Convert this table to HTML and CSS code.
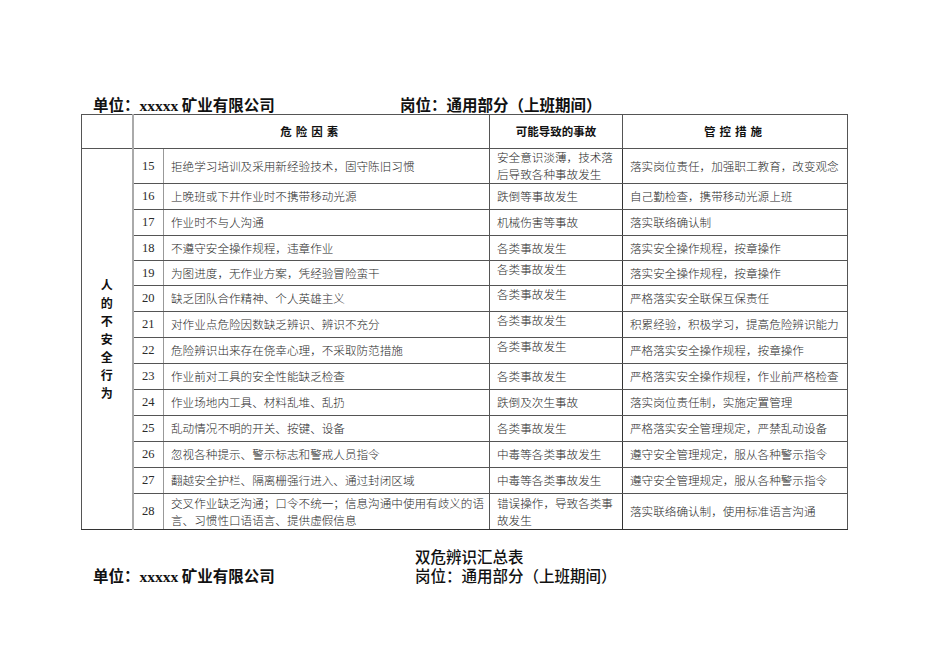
FILE: index.html
```html
<!DOCTYPE html>
<html lang="zh-CN">
<head>
<meta charset="utf-8">
<title>双危辨识汇总表</title>
<link rel="stylesheet" href="styles.css">
</head>
<body>
<div class="page">
  <div class="info top">
    <span class="unit">单位：<span class="latin">xxxxx</span> 矿业有限公司</span>
    <span class="post">岗位：通用部分（上班期间）</span>
  </div>
  <table class="grid">
    <colgroup>
      <col class="c-cat"><col class="c-no"><col class="c-haz"><col class="c-res"><col class="c-ctl">
    </colgroup>
    <thead>
      <tr class="r-head">
        <th class="cat"></th>
        <th colspan="2" class="spaced">危险因素</th>
        <th>可能导致的事故</th>
        <th class="spaced">管控措施</th>
      </tr>
    </thead>
    <tbody>
      <tr class="r-tall">
        <td class="cat" rowspan="14"><span class="vert">人<br>的<br>不<br>安<br>全<br>行<br>为</span></td>
        <td class="no">15</td>
        <td>拒绝学习培训及采用新经验技术，固守陈旧习惯</td>
        <td class="res">安全意识淡薄，技术落后导致各种事故发生</td>
        <td>落实岗位责任，加强职工教育，改变观念</td>
      </tr>
      <tr class="r26"><td class="no">16</td><td>上晚班或下井作业时不携带移动光源</td><td class="res">跌倒等事故发生</td><td>自己勤检查，携带移动光源上班</td></tr>
      <tr class="r26"><td class="no">17</td><td>作业时不与人沟通</td><td class="res">机械伤害等事故</td><td>落实联络确认制</td></tr>
      <tr class="r25"><td class="no">18</td><td>不遵守安全操作规程，违章作业</td><td class="res">各类事故发生</td><td>落实安全操作规程，按章操作</td></tr>
      <tr class="r25"><td class="no">19</td><td>为图进度，无作业方案，凭经验冒险蛮干</td><td class="res top-al">各类事故发生</td><td>落实安全操作规程，按章操作</td></tr>
      <tr class="r26"><td class="no">20</td><td>缺乏团队合作精神、个人英雄主义</td><td class="res top-al">各类事故发生</td><td>严格落实安全联保互保责任</td></tr>
      <tr class="r26"><td class="no">21</td><td>对作业点危险因数缺乏辨识、辨识不充分</td><td class="res top-al">各类事故发生</td><td>积累经验，积极学习，提高危险辨识能力</td></tr>
      <tr class="r26"><td class="no">22</td><td>危险辨识出来存在侥幸心理，不采取防范措施</td><td class="res top-al">各类事故发生</td><td>严格落实安全操作规程，按章操作</td></tr>
      <tr class="r26"><td class="no">23</td><td>作业前对工具的安全性能缺乏检查</td><td class="res">各类事故发生</td><td>严格落实安全操作规程，作业前严格检查</td></tr>
      <tr class="r26"><td class="no">24</td><td>作业场地内工具、材料乱堆、乱扔</td><td class="res">跌倒及次生事故</td><td>落实岗位责任制，实施定置管理</td></tr>
      <tr class="r26"><td class="no">25</td><td>乱动情况不明的开关、按键、设备</td><td class="res">各类事故发生</td><td>严格落实安全管理规定，严禁乱动设备</td></tr>
      <tr class="r26"><td class="no">26</td><td>忽视各种提示、警示标志和警戒人员指令</td><td class="res">中毒等各类事故发生</td><td>遵守安全管理规定，服从各种警示指令</td></tr>
      <tr class="r26"><td class="no">27</td><td>翻越安全护栏、隔离栅强行进入、通过封闭区域</td><td class="res">中毒等各类事故发生</td><td>遵守安全管理规定，服从各种警示指令</td></tr>
      <tr class="r-last"><td class="no">28</td><td>交叉作业缺乏沟通；口令不统一；信息沟通中使用有歧义的语言、习惯性口语语言、提供虚假信息</td><td class="res">错误操作，导致各类事故发生</td><td>落实联络确认制，使用标准语言沟通</td></tr>
    </tbody>
  </table>
  <div class="title">双危辨识汇总表</div>
  <div class="info bottom">
    <span class="unit">单位：<span class="latin">xxxxx</span> 矿业有限公司</span>
    <span class="post light">岗位：通用部分（上班期间）</span>
  </div>
</div>
</body>
</html>
```

FILE: styles.css
```css
html, body {
  margin: 0;
  padding: 0;
  background: #ffffff;
}

.page {
  padding: 94px 0 0 81px;
  font-family: "Noto Sans CJK SC", "Liberation Sans", sans-serif;
  color: #222;
}

.info {
  display: flex;
  padding-left: 12px;
  font-size: 15.5px;
  line-height: 20px;
  height: 20px;
  font-weight: bold;
  color: #111;
}

.info .unit {
  width: 307px;
  flex: none;
}

.info .latin {
  font-family: "Liberation Serif", serif;
  font-weight: bold;
}

.info.bottom {
  line-height: 18px;
  height: 18px;
  margin-top: 1px;
}

.info.bottom .unit {
  width: 322px;
}

.info .light {
  font-weight: 500;
}

.title {
  margin-top: 17px;
  padding-left: 334px;
  font-size: 15.5px;
  line-height: 18px;
  height: 18px;
  font-weight: 500;
  color: #111;
}

.grid {
  border-collapse: collapse;
  table-layout: fixed;
  width: 766px;
  border: 1px solid #333;
  font-size: 11.6px;
  line-height: 17px;
}

.c-cat { width: 51px; }
.c-no { width: 31px; }
.c-haz { width: 326px; }
.c-res { width: 133px; }
.c-ctl { width: 225px; }

.grid th,
.grid td {
  border: 1px solid #555;
  padding: 0 1px 0 7px;
  text-align: left;
  vertical-align: middle;
  font-weight: 300;
  color: #2a2a2a;
}

.grid th {
  text-align: center;
  font-weight: bold;
  font-size: 11.5px;
  color: #111;
  height: 33px;
  padding: 0;
}

.grid th.spaced {
  letter-spacing: 4px;
}

.grid .cat {
  border-right: 2px solid #aaa;
  padding: 0;
  text-align: center;
}

.grid td.cat {
  border-bottom: 1px solid #333;
}

.vert {
  display: inline-block;
  font-weight: bold;
  font-size: 12px;
  line-height: 18px;
  color: #111;
}

.grid td.no {
  padding: 0;
  text-align: center;
  font-family: "Liberation Serif", serif;
  font-size: 12.5px;
  font-weight: normal;
  border-right-color: #999;
}

.grid td.res {
  border-left-color: #333;
  border-right-color: #333;
  padding-right: 2px;
}

.grid td.top-al {
  vertical-align: top;
}

.r-tall td { height: 34px; }
.r26 td { height: 25px; }
.r25 td { height: 24px; }
.r-last td { height: 35px; }
.r-last td { border-bottom-color: #333; }
```
